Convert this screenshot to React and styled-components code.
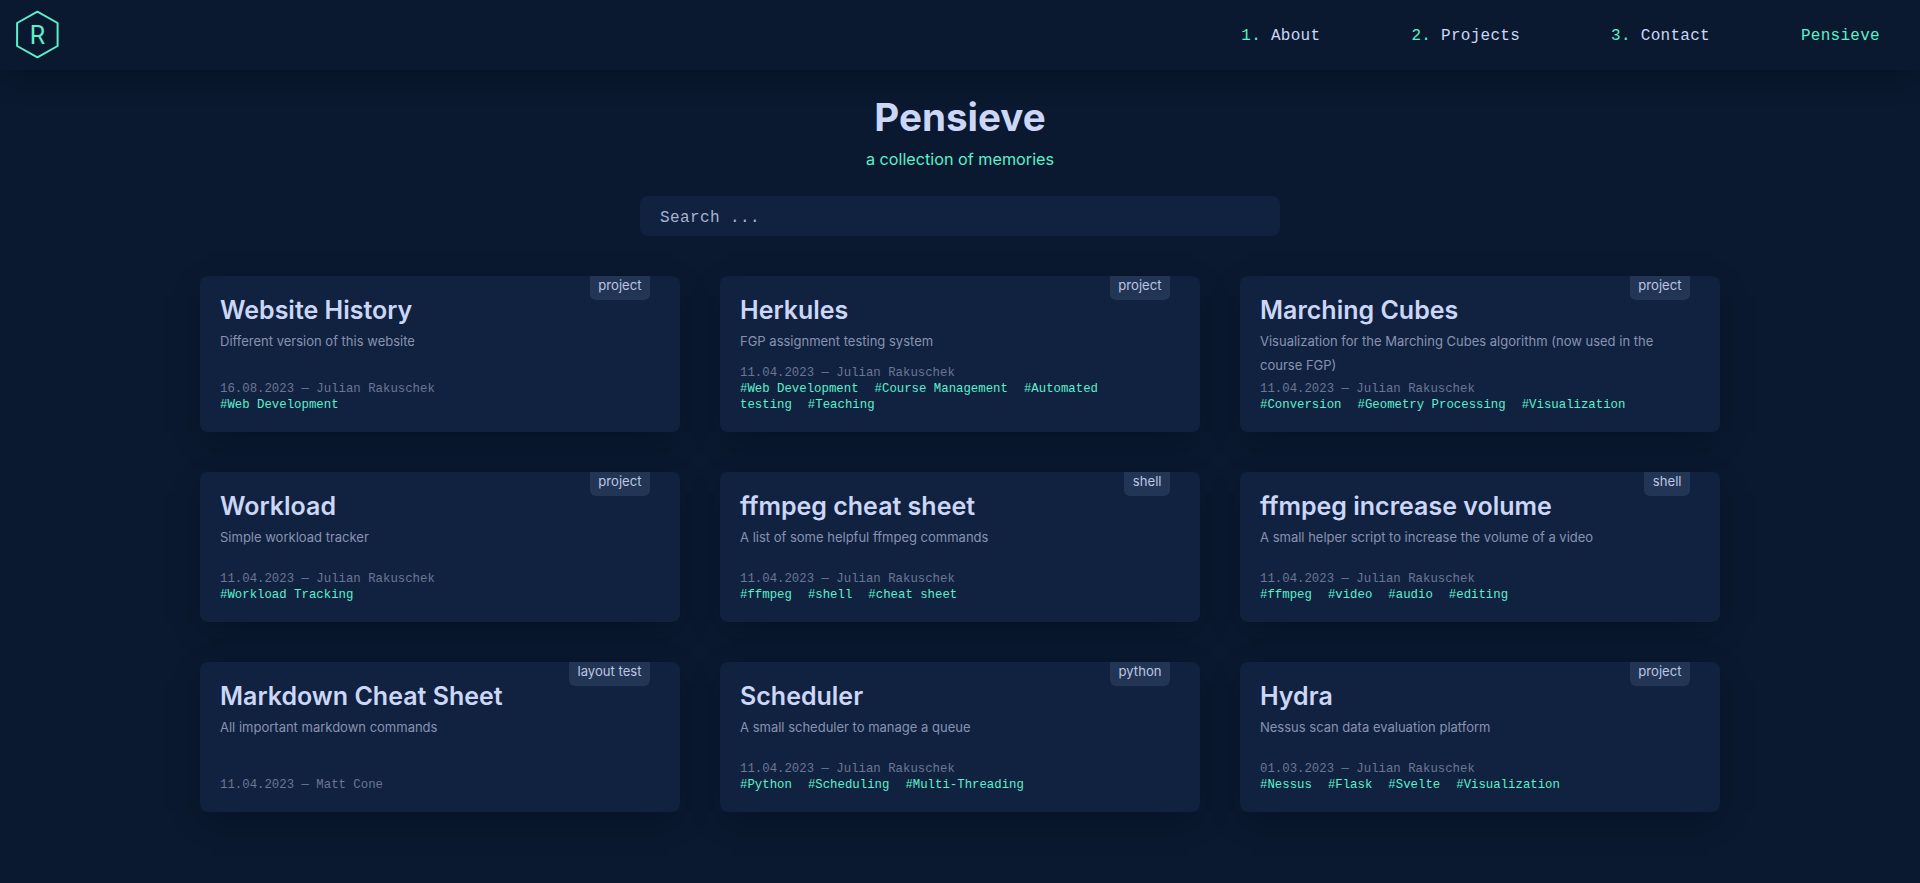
import React from 'react'
import styled, { createGlobalStyle } from 'styled-components'

const accent = '#5af0cb'
const mono = '"Liberation Mono", monospace'
const sans = 'Inter, "Noto Sans", sans-serif'

const GlobalStyle = createGlobalStyle`
  html, body {
    margin: 0;
    background: #0a192f;
    font-family: ${sans};
  }
  * { box-sizing: border-box; }
`

const Header = styled.header`
  height: 70px;
  display: flex;
  align-items: center;
  justify-content: space-between;
  padding: 0 40px 0 16px;
  background: #0a192f;
  box-shadow: 0 10px 30px -10px rgba(2, 12, 27, 0.7);
`

const Logo = styled.svg`
  width: 44px;
  height: 50px;
  display: block;
`

const Nav = styled.nav`
  display: flex;
  gap: 91px;
  padding-top: 2px;
  font-family: ${mono};
  font-size: 16px;
  letter-spacing: 0.28px;
  color: #ccd6f6;
`

const NavLink = styled.a`
  color: ${(p) => (p.$active ? accent : '#ccd6f6')};
  white-space: pre;
`

const Num = styled.span`
  color: ${accent};
`

const Hero = styled.section`
  padding-top: 22px;
  display: flex;
  flex-direction: column;
  align-items: center;
`

const Title = styled.h1`
  margin: 0;
  font-size: 38.6px;
  line-height: 50px;
  font-weight: 700;
  color: #ccd6f6;
`

const Sub = styled.p`
  margin: 5px 0 0;
  font-size: 16.2px;
  line-height: 24px;
  color: ${accent};
`

const Search = styled.input`
  width: 640px;
  height: 40px;
  margin-top: 25px;
  padding: 3px 20px 0;
  border: 0;
  border-radius: 8px;
  outline: 0;
  background: #112240;
  color: #ccd6f6;
  font-family: ${mono};
  font-size: 16px;
  letter-spacing: 0.4px;
  &::placeholder {
    color: #a8b2d1;
    opacity: 1;
  }
`

const Grid = styled.main`
  width: 1520px;
  margin: 40px auto 71px;
  display: grid;
  grid-template-columns: repeat(3, 480px);
  gap: 40px;
`

const Card = styled.article`
  position: relative;
  min-height: 150px;
  padding: 20px 20px 19px;
  display: flex;
  flex-direction: column;
  border-radius: 8px;
  background: #112240;
  box-shadow: 0 10px 30px -10px rgba(2, 12, 27, 0.7);
`

const Badge = styled.span`
  position: absolute;
  top: 0;
  right: 30px;
  height: 24px;
  padding: 0 8.5px;
  border-radius: 0 0 6px 6px;
  background: #233554;
  color: #bcc6e4;
  font-size: 13.1px;
  line-height: 19px;
`

const CardTitle = styled.h2`
  margin: 0 0 5px;
  font-size: 25px;
  line-height: 28px;
  font-weight: 600;
  color: #ccd6f6;
`

const Desc = styled.p`
  margin: 0 0 4px;
  max-width: 420px;
  font-size: 13px;
  line-height: 24px;
  color: #8892b0;
`

const Meta = styled.div`
  margin-top: auto;
  font-family: ${mono};
  font-size: 12.35px;
  line-height: 16px;
`

const DateLine = styled.div`
  color: #6b7694;
`

const Tags = styled.div`
  color: ${accent};
`

const Tag = styled.span`
  margin-right: 16px;
`

const posts = [
  { title: 'Website History', desc: 'Different version of this website', badge: 'project', date: '16.08.2023', author: 'Julian Rakuschek', tags: ['Web Development'] },
  { title: 'Herkules', desc: 'FGP assignment testing system', badge: 'project', date: '11.04.2023', author: 'Julian Rakuschek', tags: ['Web Development', 'Course Management', 'Automated testing', 'Teaching'] },
  { title: 'Marching Cubes', desc: 'Visualization for the Marching Cubes algorithm (now used in the course FGP)', badge: 'project', date: '11.04.2023', author: 'Julian Rakuschek', tags: ['Conversion', 'Geometry Processing', 'Visualization'] },
  { title: 'Workload', desc: 'Simple workload tracker', badge: 'project', date: '11.04.2023', author: 'Julian Rakuschek', tags: ['Workload Tracking'] },
  { title: 'ffmpeg cheat sheet', desc: 'A list of some helpful ffmpeg commands', badge: 'shell', date: '11.04.2023', author: 'Julian Rakuschek', tags: ['ffmpeg', 'shell', 'cheat sheet'] },
  { title: 'ffmpeg increase volume', desc: 'A small helper script to increase the volume of a video', badge: 'shell', date: '11.04.2023', author: 'Julian Rakuschek', tags: ['ffmpeg', 'video', 'audio', 'editing'] },
  { title: 'Markdown Cheat Sheet', desc: 'All important markdown commands', badge: 'layout test', date: '11.04.2023', author: 'Matt Cone', tags: [] },
  { title: 'Scheduler', desc: 'A small scheduler to manage a queue', badge: 'python', date: '11.04.2023', author: 'Julian Rakuschek', tags: ['Python', 'Scheduling', 'Multi-Threading'] },
  { title: 'Hydra', desc: 'Nessus scan data evaluation platform', badge: 'project', date: '01.03.2023', author: 'Julian Rakuschek', tags: ['Nessus', 'Flask', 'Svelte', 'Visualization'] },
]

export default function App() {
  return (
    <>
      <GlobalStyle />
      <Header>
        <Logo viewBox="0 0 44 50">
          <polygon points="21.4,1.7 41.6,13 41.6,36 21.4,47.3 1.1,36 1.1,13" fill="none" stroke={accent} strokeWidth="2" strokeLinejoin="round" />
          <text x="21.4" y="34" textAnchor="middle" fill={accent} fontFamily="Roboto, sans-serif" fontSize="25">R</text>
        </Logo>
        <Nav>
          <NavLink><Num>1. </Num>About</NavLink>
          <NavLink><Num>2. </Num>Projects</NavLink>
          <NavLink><Num>3. </Num>Contact</NavLink>
          <NavLink $active>Pensieve</NavLink>
        </Nav>
      </Header>
      <Hero>
        <Title>Pensieve</Title>
        <Sub>a collection of memories</Sub>
        <Search placeholder="Search ..." />
      </Hero>
      <Grid>
        {posts.map((post) => (
          <Card key={post.title}>
            <Badge>{post.badge}</Badge>
            <CardTitle>{post.title}</CardTitle>
            <Desc>{post.desc}</Desc>
            <Meta>
              <DateLine>{post.date} — {post.author}</DateLine>
              {post.tags.length > 0 && (
                <Tags>
                  {post.tags.map((tag) => (
                    <Tag key={tag}>#{tag}</Tag>
                  ))}
                </Tags>
              )}
            </Meta>
          </Card>
        ))}
      </Grid>
    </>
  )
}
